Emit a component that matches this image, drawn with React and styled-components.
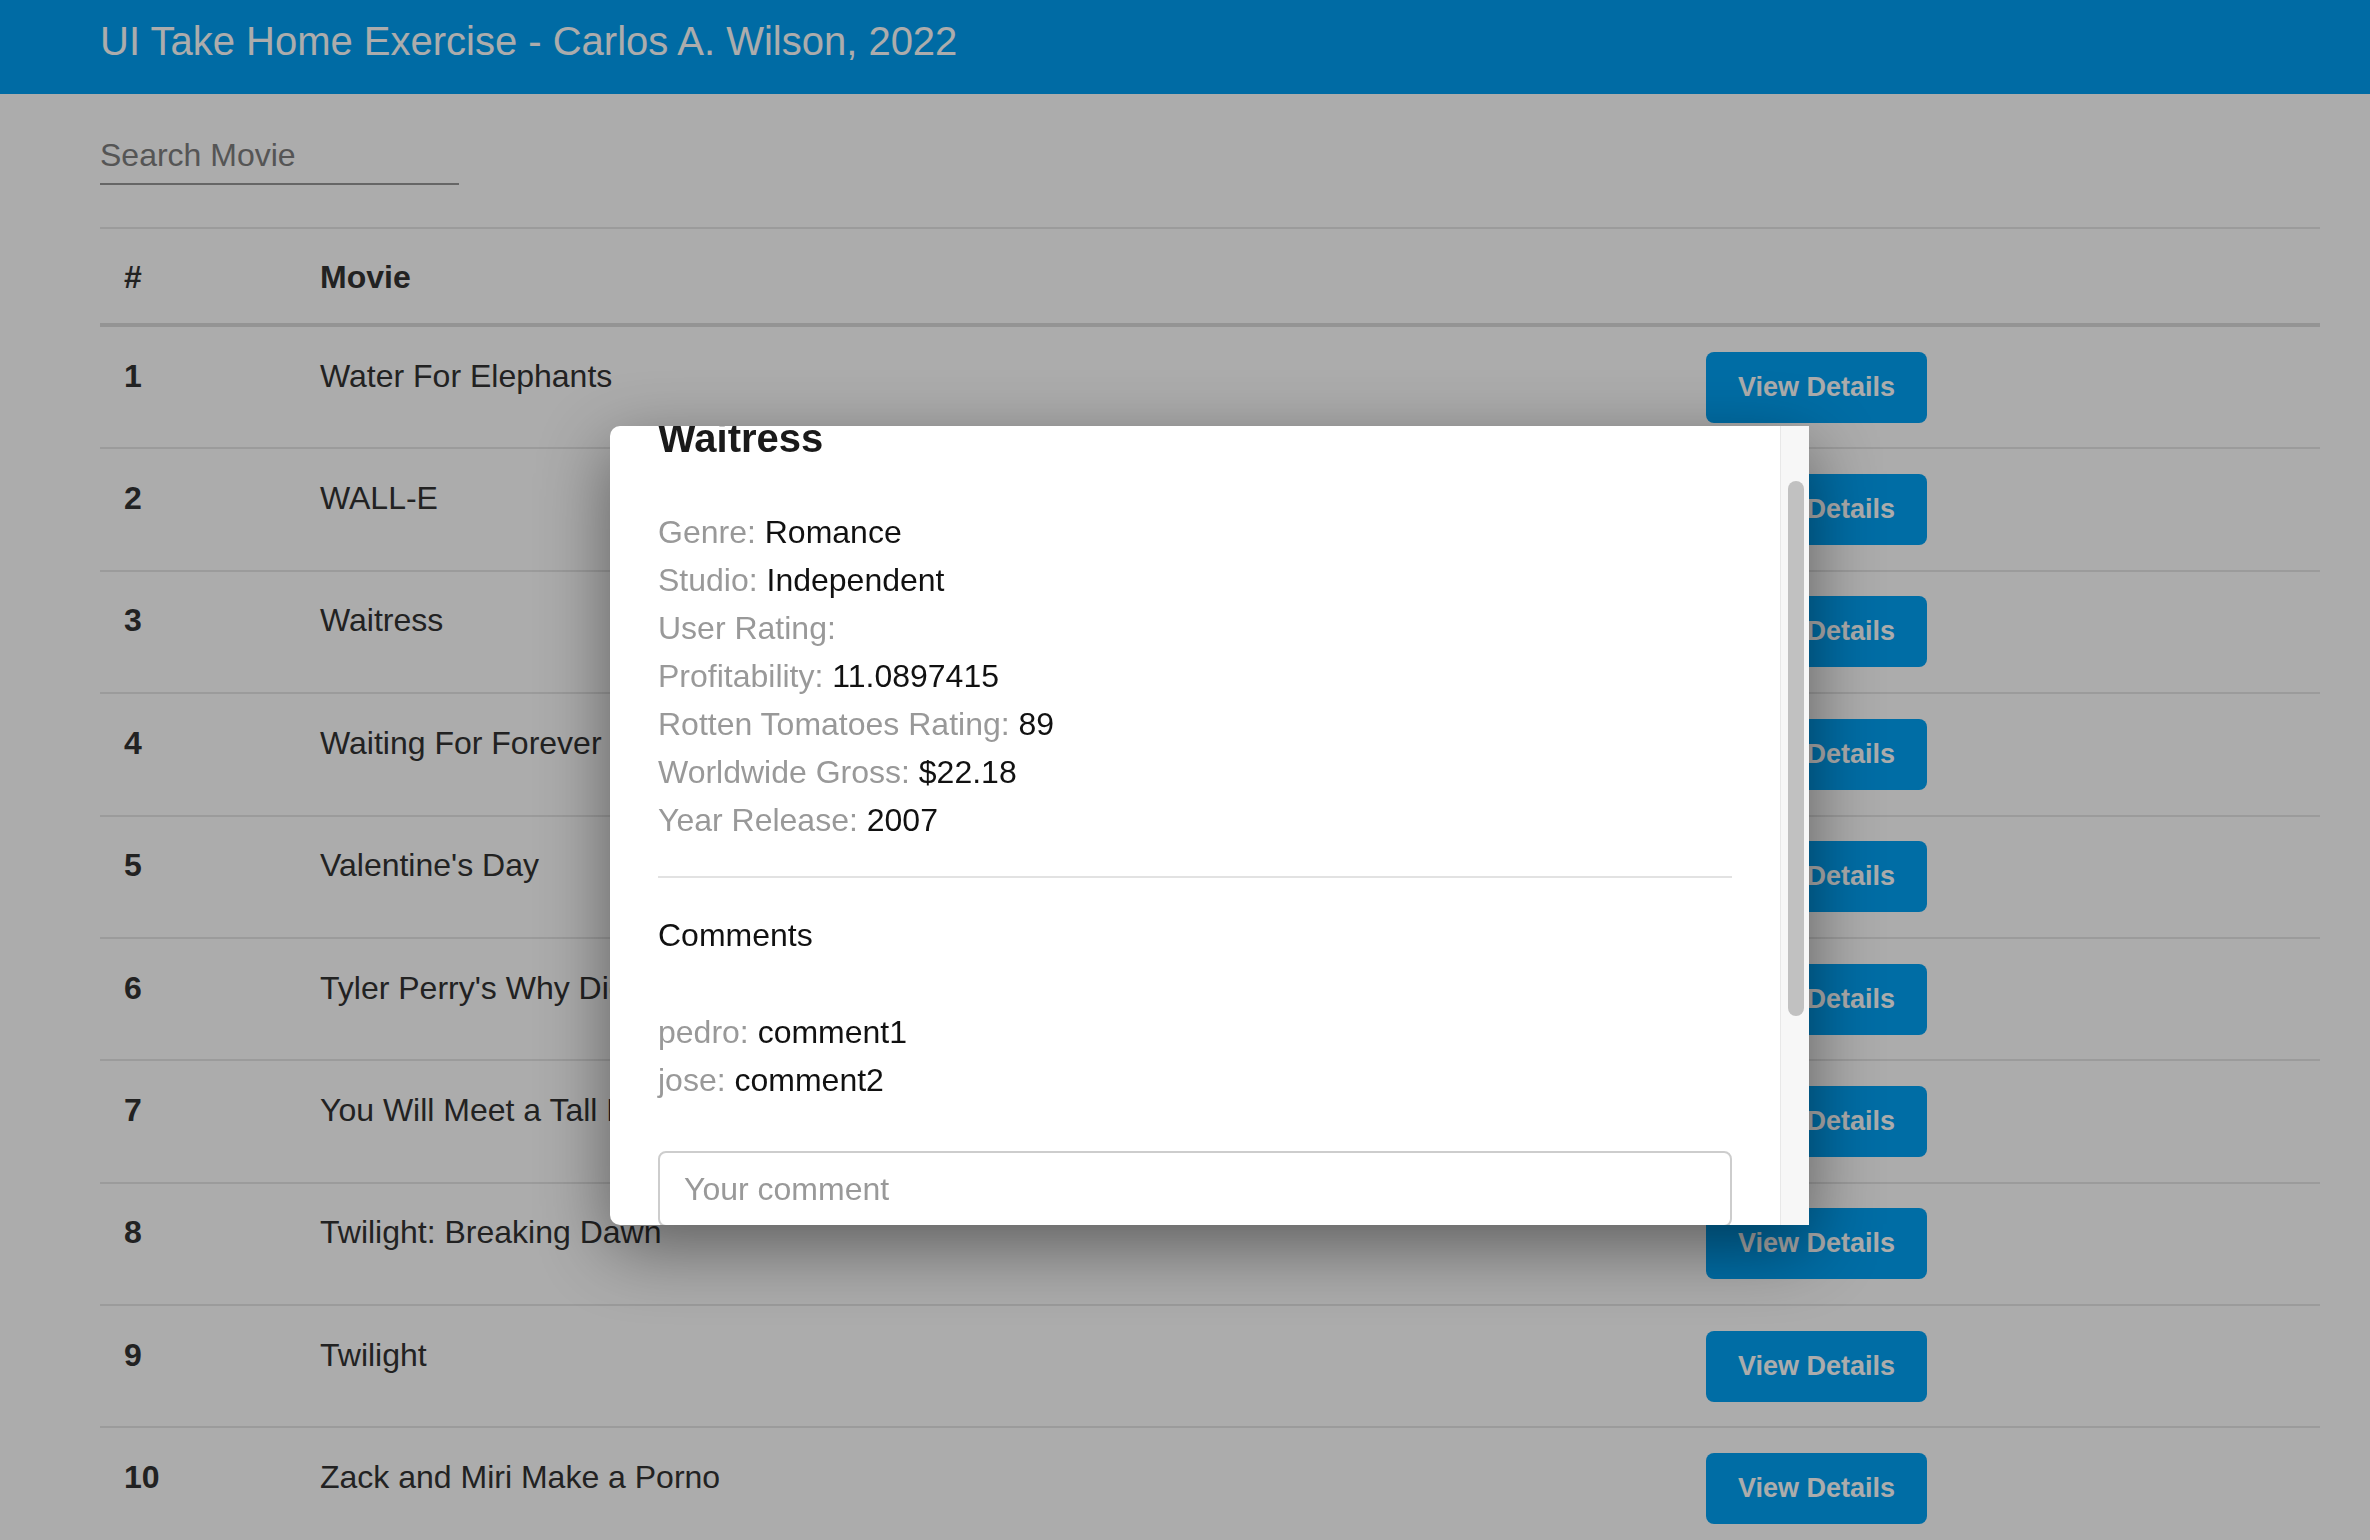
import React, { useEffect, useRef } from "react";
import styled, { createGlobalStyle } from "styled-components";

const GlobalStyle = createGlobalStyle`
  * { box-sizing: border-box; }
  html, body { margin: 0; padding: 0; }
  body {
    background: #fff;
    color: #333;
    font-family: "Liberation Sans", Arial, Helvetica, sans-serif;
    font-size: 32px;
    line-height: 48px;
    overflow: hidden;
  }
`;

const Header = styled.header`
  height: 94px;
  padding: 17px 100px 0;
  background: #009ff3;
  color: #fff;
  font-size: 40px;
  line-height: 48px;
`;

const Main = styled.main`
  padding: 37px 50px 0 100px;
`;

const SearchInput = styled.input`
  display: block;
  width: 359px;
  height: 54px;
  padding: 0 0 4px;
  border: 0;
  border-bottom: 2px solid #979797;
  background: transparent;
  outline: none;
  font: 400 32px/48px "Liberation Sans", Arial, sans-serif;
  color: #333;
  &::placeholder {
    color: #7e7e7e;
  }
`;

const Table = styled.div`
  margin-top: 42px;
`;

const Row = styled.div`
  display: grid;
  grid-template-columns: 196px 1386px 1fr;
  border-top: ${(p) => (p.$head ? "2px solid #e6e6e6" : "0")};
  border-bottom: ${(p) => (p.$head ? "4px solid #dcdcdc" : "2px solid #e6e6e6")};
`;

const Cell = styled.div`
  padding: ${(p) => (p.$head ? "24px 24px 22px" : "24.7px 24px")};
  font-weight: ${(p) => (p.$bold ? 700 : 400)};
  white-space: nowrap;
`;

const DetailsButton = styled.button`
  display: inline-block;
  padding: 14px 32px;
  border: 0;
  border-radius: 8px;
  background: #00a2f5;
  color: #fff;
  font: 700 27px/43px "Liberation Sans", Arial, sans-serif;
  cursor: pointer;
`;

const Backdrop = styled.div`
  position: fixed;
  inset: 0;
  background: rgba(0, 0, 0, 0.325);
`;

const Dialog = styled.div`
  position: fixed;
  left: 610px;
  top: 426px;
  width: 1199px;
  height: 799px;
  display: flex;
  background: #fff;
  border-radius: 10px 0 0 10px;
  box-shadow: 0 22px 70px rgba(0, 0, 0, 0.45);
  overflow: hidden;
`;

const DialogScroll = styled.div`
  flex: 1;
  min-width: 0;
  overflow-y: scroll;
  scrollbar-width: none;
  &::-webkit-scrollbar {
    display: none;
  }
`;

const ScrollTrack = styled.div`
  flex: none;
  width: 29px;
  padding: 55px 5px 0 7px;
  background: #f7f7f7;
  border-left: 1px solid #e8e8e8;
`;

const ScrollThumb = styled.div`
  height: 535px;
  border-radius: 8px;
  background: #c1c1c1;
`;

const DialogBody = styled.div`
  min-height: 1193px;
  padding: 70px 48px 48px;
  color: #111;
`;

const Title = styled.h5`
  margin: 0 0 46px;
  font-size: 40px;
  line-height: 48px;
  font-weight: 700;
  color: #1a1a1a;
`;

const Line = styled.div`
  font-size: 32px;
  line-height: 48px;
`;

const Label = styled.span`
  color: #999;
`;

const Divider = styled.hr`
  margin: 32px 0 33px;
  border: 0;
  border-top: 2px solid #e2e2e2;
`;

const SectionTitle = styled.div`
  margin-bottom: 49px;
  line-height: 48px;
`;

const CommentInput = styled.input`
  display: block;
  width: 100%;
  height: 76px;
  margin-top: 47px;
  padding: 0 24px;
  border: 2px solid #cdcdcd;
  border-radius: 8px;
  outline: none;
  font: 400 32px/48px "Liberation Sans", Arial, sans-serif;
  color: #333;
  &::placeholder {
    color: #999;
  }
`;

const SubmitButton = styled(DetailsButton)`
  margin-top: 32px;
`;

const movies = [
  "Water For Elephants",
  "WALL-E",
  "Waitress",
  "Waiting For Forever",
  "Valentine's Day",
  "Tyler Perry's Why Did I get Married",
  "You Will Meet a Tall Dark Stranger",
  "Twilight: Breaking Dawn",
  "Twilight",
  "Zack and Miri Make a Porno",
];

const details = [
  ["Genre", "Romance"],
  ["Studio", "Independent"],
  ["User Rating", ""],
  ["Profitability", "11.0897415"],
  ["Rotten Tomatoes Rating", "89"],
  ["Worldwide Gross", "$22.18"],
  ["Year Release", "2007"],
];

const comments = [
  ["pedro", "comment1"],
  ["jose", "comment2"],
];

export default function App() {
  const scrollRef = useRef(null);

  useEffect(() => {
    if (scrollRef.current) scrollRef.current.scrollTop = 82;
  }, []);

  return (
    <>
      <GlobalStyle />
      <Header>UI Take Home Exercise - Carlos A. Wilson, 2022</Header>
      <Main>
        <SearchInput placeholder="Search Movie" />
        <Table>
          <Row $head>
            <Cell $head $bold>#</Cell>
            <Cell $head $bold>Movie</Cell>
            <Cell $head />
          </Row>
          {movies.map((name, i) => (
            <Row key={name}>
              <Cell $bold>{i + 1}</Cell>
              <Cell>{name}</Cell>
              <Cell>
                <DetailsButton>View Details</DetailsButton>
              </Cell>
            </Row>
          ))}
        </Table>
      </Main>

      <Backdrop />
      <Dialog>
        <DialogScroll ref={scrollRef}>
          <DialogBody>
            <Title>Waitress</Title>
            {details.map(([label, value]) => (
              <Line key={label}>
                <Label>{label}:</Label> {value}
              </Line>
            ))}
            <Divider />
            <SectionTitle>Comments</SectionTitle>
            {comments.map(([user, text]) => (
              <Line key={user}>
                <Label>{user}:</Label> {text}
              </Line>
            ))}
            <CommentInput placeholder="Your comment" />
            <SubmitButton>Add Comment</SubmitButton>
          </DialogBody>
        </DialogScroll>
        <ScrollTrack>
          <ScrollThumb />
        </ScrollTrack>
      </Dialog>
    </>
  );
}
